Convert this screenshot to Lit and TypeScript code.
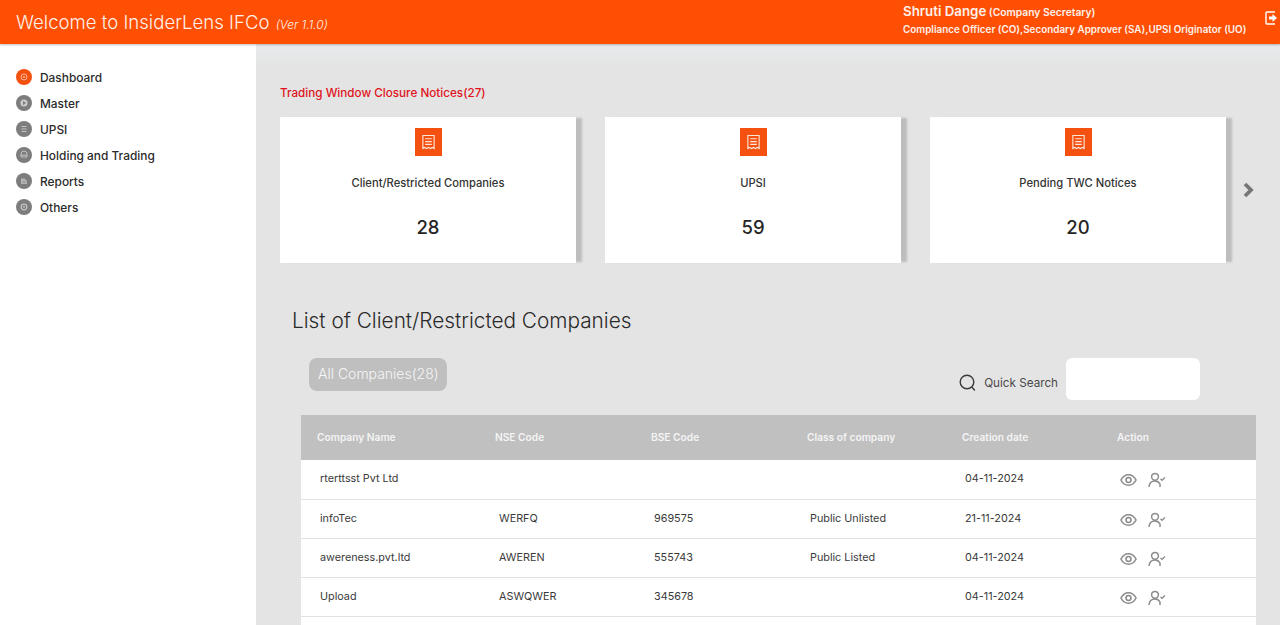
import { LitElement, html, css, svg } from "lit";
import { customElement } from "lit/decorators.js";

const menu = [
  { label: "Dashboard", active: true, glyph: svg`<circle cx="8" cy="8" r="3" fill="none" stroke="#ffb79c" stroke-width="1"/><circle cx="8" cy="8" r="1" fill="#ffb79c"/>` },
  { label: "Master", glyph: svg`<circle cx="8" cy="8" r="3.6" fill="#c9c9c9"/><path d="M7 6l3 2-3 2z" fill="#7d7d7d"/>` },
  { label: "UPSI", glyph: svg`<path d="M5.5 5.500h5M5.500 8h5M5.500 10.500h5" stroke="#c4c4c4" stroke-width="1" fill="none"/>` },
  { label: "Holding and Trading", glyph: svg`<path d="M5 10V7a3 3 0 0 1 6 0v3zM5 8.200h6" stroke="#c4c4c4" stroke-width="1" fill="none"/>` },
  { label: "Reports", glyph: svg`<path d="M5 11V5.500h3.500L11 8v3z" fill="#b4b4b4"/><path d="M6.500 9h3" stroke="#7d7d7d" stroke-width=".8"/>` },
  { label: "Others", glyph: svg`<circle cx="8" cy="8" r="2.800" fill="none" stroke="#c4c4c4" stroke-width="1.200"/><circle cx="8" cy="8" r=".9" fill="#c4c4c4"/>` },
];

const cards = [
  { title: "Client/Restricted Companies", value: "28" },
  { title: "UPSI", value: "59" },
  { title: "Pending TWC Notices", value: "20" },
];

const rows = [
  ["rterttsst Pvt Ltd", "", "", "", "04-11-2024"],
  ["infoTec", "WERFQ", "969575", "Public Unlisted", "21-11-2024"],
  ["awereness.pvt.ltd", "AWEREN", "555743", "Public Listed", "04-11-2024"],
  ["Upload", "ASWQWER", "345678", "", "04-11-2024"],
  ["", "", "", "", ""],
];

const receiptIcon = html`<svg viewBox="0 0 16 18" width="15" height="17" fill="none" stroke="#fde6da" stroke-width="1.200">
  <path d="M2 1.500h12v14l-2-1.200-2 1.200-2-1.200-2 1.200-2-1.200-2 1.200z"/>
  <path d="M4.500 5h7M4.500 8h7M4.500 11h7"/>
</svg>`;

const eyeIcon = html`<svg viewBox="0 0 18 14" width="17" height="14" fill="none" stroke="#8c8c8c" stroke-width="1.700">
  <path d="M1 7c2-3.800 4.800-5.600 8-5.600S15 3.200 17 7c-2 3.800-4.800 5.600-8 5.600S3 10.800 1 7z"/>
  <circle cx="9" cy="7" r="2.600"/>
</svg>`;

const userCheckIcon = html`<svg viewBox="0 0 18 16" width="18" height="16" fill="none" stroke="#8c8c8c" stroke-width="1.500">
  <circle cx="7" cy="4.800" r="3.400"/>
  <path d="M1 15c.3-3.800 2.600-6 6-6 2.200 0 3.900 1 5 3v3"/>
  <path d="M12.500 7l1.500 1.300L17 5.500" stroke-width="1.300"/>
</svg>`;

@customElement("app-root")
export class AppRoot extends LitElement {
  static styles = css`
    :host {
      display: block;
      height: 625px;
      overflow: hidden;
      font-family: Inter, "Open Sans", sans-serif;
      color: #2a2a2a;
      background: #e4e4e4;
    }

    .topbar {
      height: 44px;
      background: #ff4f03;
      color: #fdf1ea;
      display: flex;
      align-items: center;
      box-shadow: 0 1px 2px rgba(0, 0, 0, 0.25);
      position: relative;
    }

    .brand {
      margin-left: 16px;
      font-size: 18.600px;
      font-weight: 300;
      white-space: nowrap;
    }

    .brand em {
      margin-left: 1px;
      font-size: 11.900px;
    }

    .who {
      margin-left: auto;
      width: 362px;
      font-size: 9.900px;
      font-weight: 600;
      line-height: 17px;
      padding-bottom: 3px;
      white-space: nowrap;
    }

    .who b {
      font-size: 13.300px;
      font-weight: 600;
    }

    .who small {
      font-size: 10.300px;
    }

    .logout {
      width: 12px;
      height: 14px;
      margin: 0 3px 8px 0;
    }

    .body {
      display: flex;
      height: 581px;
    }

    .side {
      width: 256px;
      flex: none;
      background: #fff;
      padding-top: 20px;
      box-sizing: border-box;
    }

    .side a {
      display: flex;
      align-items: center;
      gap: 8px;
      height: 26px;
      padding-left: 16px;
      font-size: 11.900px;
      font-weight: 500;
      color: #2b2b2b;
    }

    .main {
      flex: 1;
      min-width: 0;
      padding: 41px 0 0 24px;
      background: linear-gradient(#e9ebec, #e4e4e4 22px);
    }

    .notice {
      font-size: 11.700px;
      font-weight: 500;
      line-height: 16px;
      color: #e0131c;
    }

    .strip {
      display: flex;
      align-items: center;
      margin-top: 16px;
    }

    .cards {
      display: flex;
      gap: 29px;
    }

    .card {
      width: 296px;
      height: 146px;
      box-sizing: border-box;
      background: #fff;
      box-shadow: 7px 0 2px -1px #bdbdbd;
      padding-top: 11px;
      display: flex;
      flex-direction: column;
      align-items: center;
    }

    .tile {
      width: 27px;
      height: 28px;
      background: #f4500f;
      display: flex;
      align-items: center;
      justify-content: center;
    }

    .card h4 {
      margin: 20px 0 0;
      font-size: 11.200px;
      font-weight: 500;
      line-height: 14px;
      color: #333;
    }

    .card strong {
      margin-top: 25px;
      font-size: 18.500px;
      font-weight: 500;
      line-height: 24px;
      color: #262626;
    }

    .next {
      margin: 0 0 0 16px;
      width: 13px;
      height: 18px;
    }

    .heading {
      margin: 45px 0 0 12px;
      font-size: 20.800px;
      font-weight: 300;
      line-height: 26px;
      color: #2a2a2a;
    }

    .tools {
      display: flex;
      align-items: flex-start;
      margin: 24px 0 0 29px;
      width: 891px;
    }

    .all {
      width: 120px;
      height: 33px;
      padding: 0 9px;
      border-radius: 8px;
      background: #bfbfbf;
      color: #f6f6f6;
      font-size: 14px;
      font-weight: 300;
      line-height: 32px;
      white-space: nowrap;
    }

    .search {
      margin-left: auto;
      display: flex;
      align-items: center;
      gap: 7px;
      font-size: 11.700px;
      font-weight: 400;
      color: #4a4a4a;
    }

    .search svg {
      margin: 8px 1px 0 0;
    }

    .search span {
      margin: 8px 1px 0 0;
    }

    .search div {
      width: 134px;
      height: 42px;
      background: #fff;
      border-radius: 6px;
    }

    table {
      margin: 15px 0 0 21px;
      width: 955px;
      border-collapse: collapse;
      table-layout: fixed;
    }

    th {
      height: 45px;
      padding: 0 0 2px;
      box-sizing: border-box;
      background: #c0c0c0;
      color: #f4f4f4;
      font-size: 10.200px;
      font-weight: 600;
      text-align: left;
    }

    th:first-child {
      padding-left: 16px;
    }

    td {
      height: 39px;
      box-sizing: border-box;
      background: #fff;
      border-bottom: 1px solid #e2e2e2;
      font-size: 10.800px;
      color: #3a3a3a;
      padding: 0 0 1px 3px;
    }

    td:first-child {
      padding-left: 19px;
    }

    td:nth-child(2) {
      padding-left: 4px;
    }

    .acts {
      display: flex;
      align-items: center;
      gap: 11px;
      padding: 3px 0 0;
    }
  `;

  render() {
    return html`
      <header class="topbar">
        <div class="brand">Welcome to InsiderLens IFCo <em>(Ver 1.1.0)</em></div>
        <div class="who">
          <div><b>Shruti Dange</b> <small>(Company Secretary)</small></div>
          <div>Compliance Officer (CO),Secondary Approver (SA),UPSI Originator (UO)</div>
        </div>
        <svg class="logout" viewBox="0 0 12 14" fill="none">
          <path d="M10 1H2a1 1 0 0 0-1 1v10a1 1 0 0 0 1 1h8" stroke="#fff" stroke-width="1.400"/>
          <path d="M4 5.500h3.500V3L12 7l-4.500 4V8.500H4z" fill="#fff"/>
        </svg>
      </header>
      <div class="body">
        <nav class="side">
          ${menu.map(
            (m) => html`<a>
              <svg width="16" height="16" viewBox="0 0 16 16">
                <circle cx="8" cy="8" r="8" fill=${m.active ? "#f4500f" : "#7d7d7d"} />
                ${m.glyph}
              </svg>
              <span>${m.label}</span>
            </a>`
          )}
        </nav>
        <main class="main">
          <div class="notice">Trading Window Closure Notices(27)</div>
          <div class="strip">
            <div class="cards">
              ${cards.map(
                (c) => html`<div class="card">
                  <div class="tile">${receiptIcon}</div>
                  <h4>${c.title}</h4>
                  <strong>${c.value}</strong>
                </div>`
              )}
            </div>
            <svg class="next" viewBox="0 0 13 18"><path d="M3 3l6 6-6 6" fill="none" stroke="#777" stroke-width="3.800"/></svg>
          </div>
          <h2 class="heading">List of Client/Restricted Companies</h2>
          <div class="tools">
            <div class="all">All Companies(28)</div>
            <div class="search">
              <svg width="17" height="18" viewBox="0 0 17 18" fill="none" stroke="#3c3c3c" stroke-width="1.400">
                <circle cx="8" cy="8" r="6.800"/>
                <path d="M12.800 13l3 3.500"/>
              </svg>
              <span>Quick Search</span>
              <div></div>
            </div>
          </div>
          <table>
            <colgroup>
              <col style="width:194px" /><col style="width:156px" /><col style="width:156px" />
              <col style="width:155px" /><col style="width:155px" /><col />
            </colgroup>
            <thead>
              <tr>
                <th>Company Name</th><th>NSE Code</th><th>BSE Code</th>
                <th>Class of company</th><th>Creation date</th><th>Action</th>
              </tr>
            </thead>
            <tbody>
              ${rows.map(
                (r) => html`<tr>
                  ${r.map((v) => html`<td>${v}</td>`)}
                  <td><div class="acts">${r[0] ? html`${eyeIcon}${userCheckIcon}` : ""}</div></td>
                </tr>`
              )}
            </tbody>
          </table>
        </main>
      </div>
    `;
  }
}
